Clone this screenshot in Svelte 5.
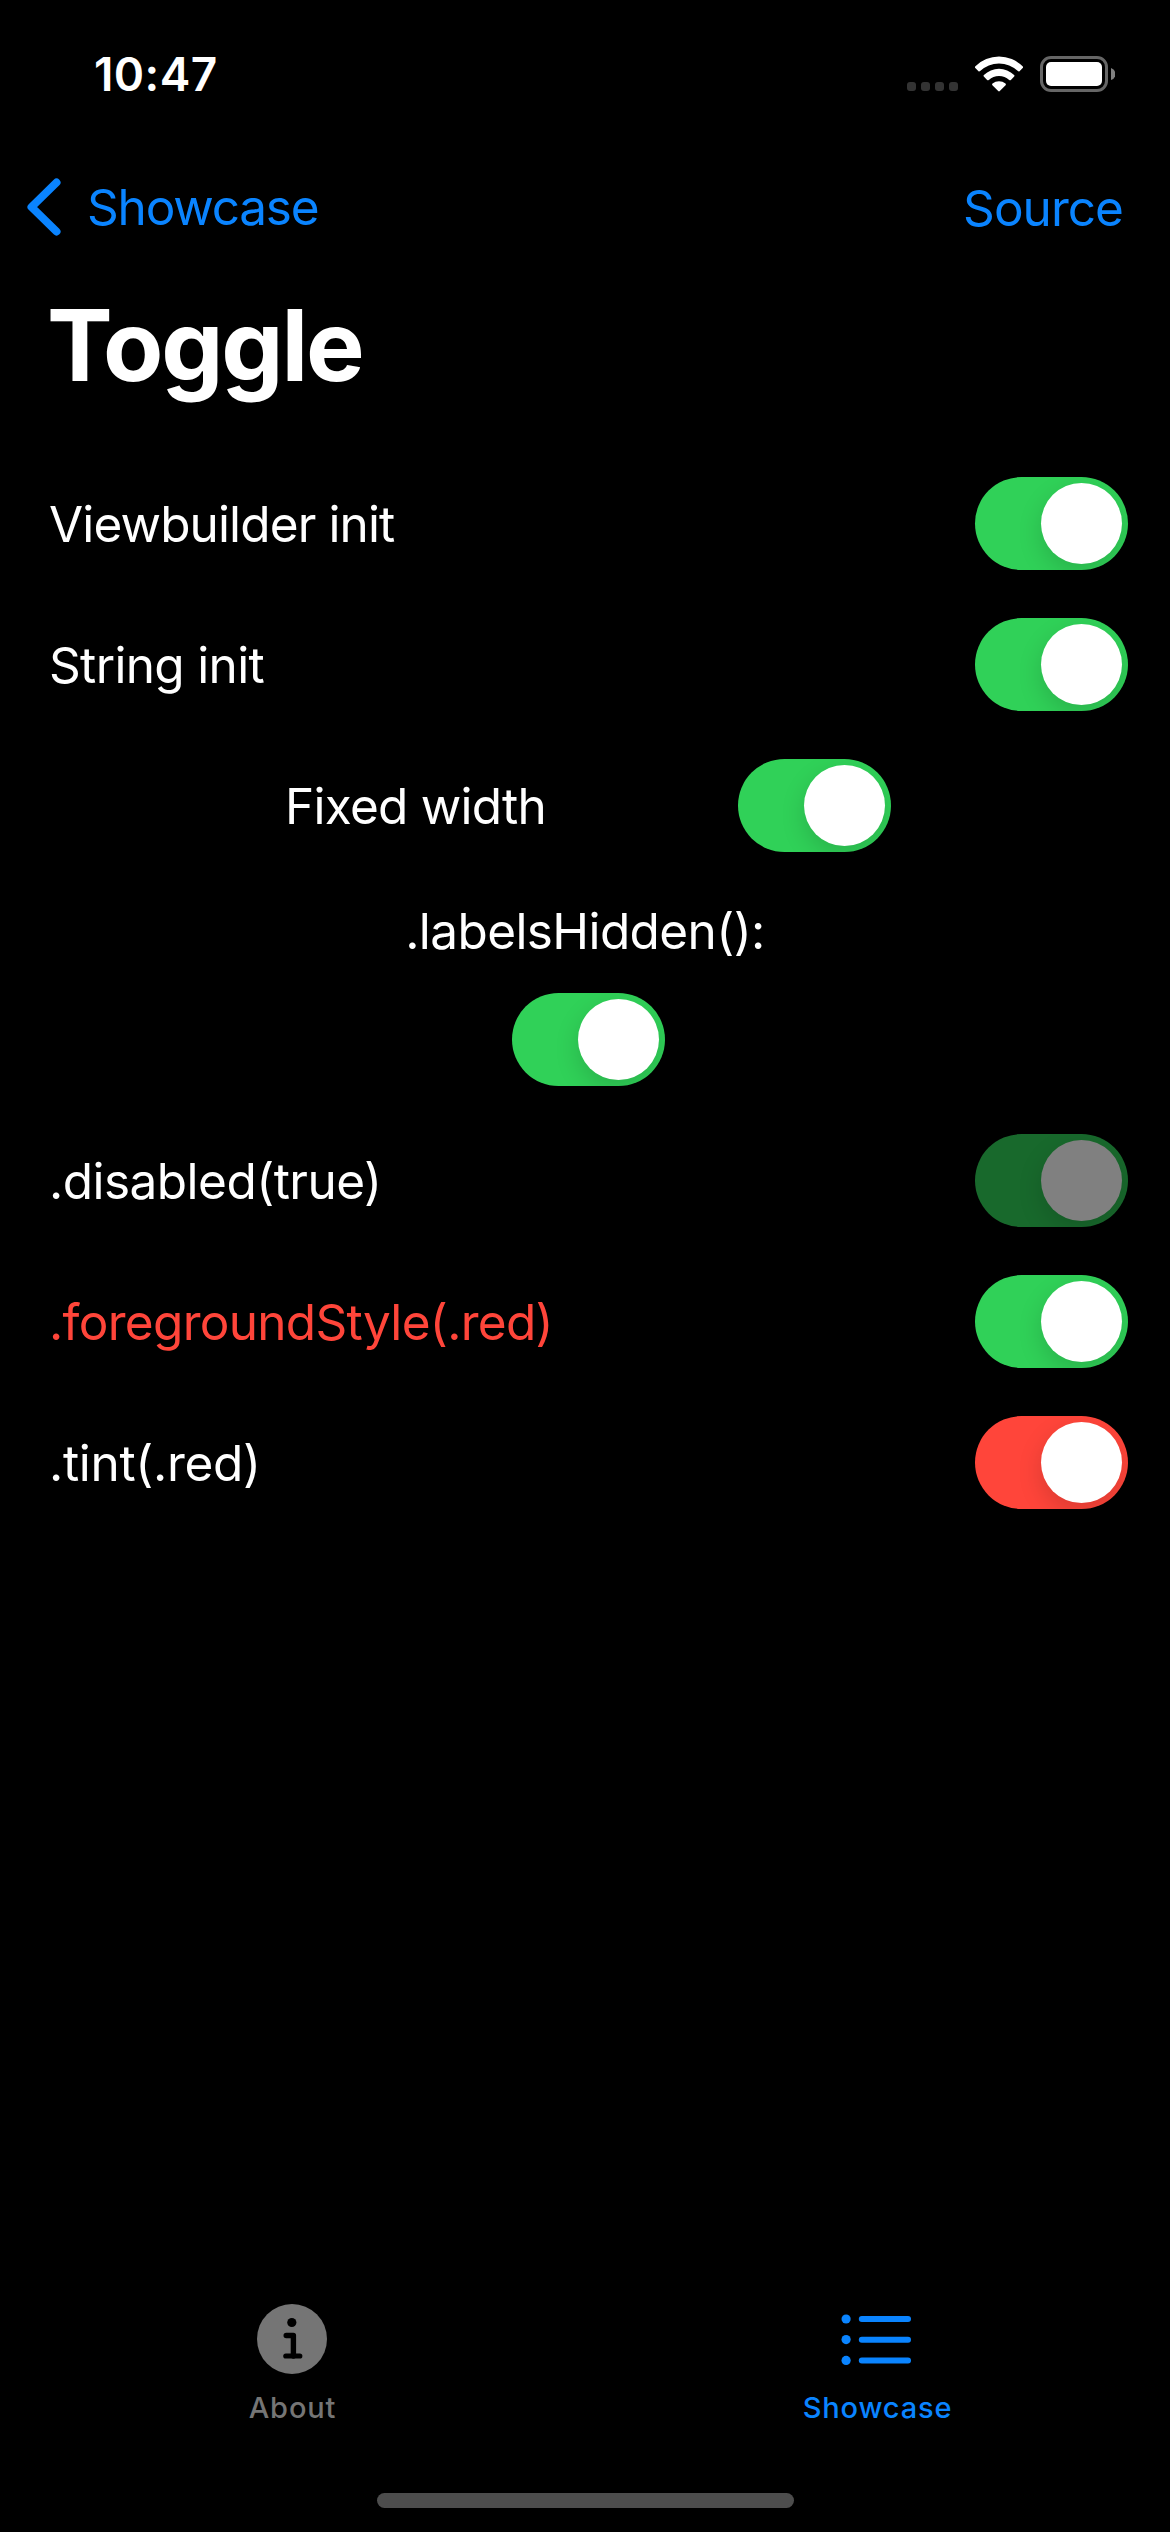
<script>
  const toggles = [
    { label: 'Viewbuilder init', fit: 'fit-viewbuilder' },
    { label: 'String init', fit: 'fit-string' },
    { label: 'Fixed width', fit: 'fit-fixed', layout: 'fixed' },
    { label: '.labelsHidden():', fit: 'fit-hidden', layout: 'stacked' },
    { label: '.disabled(true)', fit: 'fit-disabled', disabled: true },
    { label: '.foregroundStyle(.red)', fit: 'fit-style', redText: true },
    { label: '.tint(.red)', fit: 'fit-tint', redTint: true }
  ];

  let on = $state(toggles.map(() => true));
</script>

<div class="screen">
  <header class="status">
    <span class="time">10:47</span>
    <div class="indicators">
      <div class="cellular"><i></i><i></i><i></i><i></i></div>
      <svg class="wifi" width="50" height="38" viewBox="0 0 50 38">
        <path fill="#fff" d="M1.4 11.3 A33.5 33.5 0 0 1 48.6 11.3 Q49.5 12.1 48.7 12.9 L45.5 16.2 Q44.8 16.9 43.9 16.1 A27.3 27.3 0 0 0 6.1 16.1 Q5.2 16.9 4.5 16.2 L1.3 12.9 Q.5 12.1 1.4 11.3Z" />
        <path fill="#fff" d="M9.9 19.9 A21.9 21.9 0 0 1 40.1 19.9 Q41 20.8 40.2 21.6 L36.9 24.9 Q36.1 25.6 35.2 24.9 A15.1 15.1 0 0 0 14.8 24.9 Q13.9 25.6 13.1 24.9 L9.8 21.6 Q9 20.8 9.9 19.9Z" />
        <path fill="#fff" d="M18.5 28.6 A10.2 10.2 0 0 1 31.5 28.6 Q32.4 29.4 31.6 30.2 L25.8 36 Q25 36.8 24.2 36 L18.4 30.2 Q17.6 29.4 18.5 28.6Z" />
      </svg>
      <svg class="battery" width="75" height="36" viewBox="0 0 75 36">
        <rect x="1.5" y="1.5" width="65" height="33" rx="9.5" fill="none" stroke="#666" stroke-width="3" />
        <rect x="6" y="6" width="56" height="24" rx="5" fill="#fff" />
        <path d="M71 12 A6.3 6.3 0 0 1 71 24Z" fill="#808080" />
      </svg>
    </div>
  </header>

  <nav class="navbar">
    <a class="back" href="#showcase">
      <svg width="34" height="58" viewBox="0 0 34 58">
        <path d="M29.5 4.5 L4.5 29 L29.5 53.5" fill="none" stroke="currentColor" stroke-width="8" stroke-linecap="round" stroke-linejoin="round" />
      </svg>
      <span>Showcase</span>
    </a>
    <a class="source" href="#source">Source</a>
  </nav>

  <h1>Toggle</h1>

  <main>
    {#each toggles as t, i}
      <div class="row {t.layout ?? ''}">
        <span class="label {t.fit}" class:red={t.redText}>{t.label}</span>
        <button
          class="switch"
          class:on={on[i]}
          class:red-tint={t.redTint}
          disabled={t.disabled}
          role="switch"
          aria-checked={on[i]}
          aria-label={t.label}
          onclick={() => (on[i] = !on[i])}
        ><span class="knob"></span></button>
      </div>
    {/each}
  </main>

  <footer>
    <div class="tabs">
      <a class="tab" href="#about">
        <svg class="info" width="70" height="70" viewBox="0 0 70 70">
          <circle cx="35" cy="35" r="35" fill="currentColor" />
          <circle cx="34.8" cy="18.5" r="4.6" fill="#000" />
          <path d="M29.2 31.5 H36.4 V52" fill="none" stroke="#000" stroke-width="5.4" stroke-linecap="round" stroke-linejoin="round" />
          <path d="M28.8 52 H42.8" fill="none" stroke="#000" stroke-width="5.2" stroke-linecap="round" />
        </svg>
        <span>About</span>
      </a>
      <a class="tab active" href="#showcase">
        <svg class="list" width="70" height="70" viewBox="0 0 70 70">
          <g fill="currentColor">
            <circle cx="5.1" cy="15" r="4.6" />
            <circle cx="5.1" cy="35.6" r="4.6" />
            <circle cx="5.1" cy="56.4" r="4.6" />
            <rect x="17.8" y="12" width="52.2" height="6" rx="3" />
            <rect x="17.8" y="32.8" width="52.2" height="6" rx="3" />
            <rect x="17.8" y="53.5" width="52.2" height="6" rx="3" />
          </g>
        </svg>
        <span>Showcase</span>
      </a>
    </div>
    <div class="home"></div>
  </footer>
</div>

<style>
  :global(body) {
    background: #000;
  }

  .screen {
    display: flex;
    flex-direction: column;
    width: 1170px;
    height: 2532px;
    overflow: hidden;
    background: #000;
    color: #fff;
    font-family: Inter, 'Liberation Sans', sans-serif;
    font-size: 49.5px;
    line-height: 60px;
    white-space: nowrap;
  }

  a {
    color: #0a84ff;
    text-decoration: none;
  }

  .status {
    display: flex;
    justify-content: space-between;
    align-items: flex-start;
    height: 141px;
    padding: 46px 55px 0 94px;
    box-sizing: border-box;
  }

  .time {
    font-size: 46px;
    font-weight: 600;
    line-height: 56px;
    letter-spacing: 0.4px;
  }

  .indicators {
    display: flex;
    align-items: flex-start;
    padding-top: 9px;
  }

  .cellular {
    display: flex;
    gap: 5px;
    padding: 27px 16px 0 0;
  }

  .cellular i {
    width: 9px;
    height: 9px;
    border-radius: 3px;
    background: #333;
  }

  .battery {
    margin: 1px 0 0 16px;
  }

  .navbar {
    display: flex;
    justify-content: space-between;
    align-items: center;
    height: 132px;
    padding: 0 47px 0 27px;
  }

  .back {
    display: flex;
    align-items: center;
    gap: 26px;
    letter-spacing: -1.2px;
  }

  .source {
    padding-top: 2px;
    letter-spacing: -0.96px;
  }

  h1 {
    margin: 13px 0 0 47px;
    font-size: 98.5px;
    font-weight: 700;
    line-height: 120px;
    letter-spacing: -2.12px;
  }

  main {
    display: flex;
    flex: 1;
    flex-direction: column;
    gap: 48px;
    padding: 71px 42px 0 49px;
  }

  .row {
    display: flex;
    justify-content: space-between;
    align-items: center;
  }

  .row.fixed {
    width: 606px;
    margin-left: 236px;
  }

  .row.stacked {
    flex-direction: column;
    gap: 31px;
    margin-right: 7px;
  }

  .stacked .label {
    line-height: 62px;
  }

  .stacked .switch {
    margin-left: 7px;
  }

  .label.red {
    color: #ff453a;
  }

  .fit-viewbuilder { letter-spacing: -0.87px; }
  .fit-string { letter-spacing: -0.66px; }
  .fit-fixed { letter-spacing: -0.74px; }
  .fit-hidden { letter-spacing: -0.6px; }
  .fit-disabled { letter-spacing: -0.53px; }
  .fit-style { letter-spacing: -0.7px; }
  .fit-tint { letter-spacing: -0.32px; }

  .switch {
    display: flex;
    flex: none;
    width: 153px;
    height: 93px;
    padding: 6px;
    border: 0;
    border-radius: 47px;
    overflow: hidden;
    background: #39393d;
  }

  .switch.on {
    justify-content: flex-end;
    background: #30d158;
  }

  .switch.on.red-tint {
    background: #ff453a;
  }

  .switch:disabled {
    opacity: 0.5;
  }

  .knob {
    width: 81px;
    height: 81px;
    border-radius: 50%;
    background: #fff;
    box-shadow: 0 9px 24px rgba(0, 0, 0, 0.15);
  }

  footer {
    display: flex;
    flex-direction: column;
    height: 249px;
  }

  .tabs {
    display: grid;
    grid-template-columns: 1fr 1fr;
    height: 210px;
  }

  .tab {
    display: flex;
    flex-direction: column;
    align-items: center;
    gap: 16px;
    padding-top: 21px;
    color: #757575;
    font-size: 29px;
    font-weight: 450;
    line-height: 36px;
    letter-spacing: 0.85px;
  }

  .tab.active {
    color: #0a84ff;
  }

  .tab .info {
    margin-right: 1px;
  }

  .tab .list {
    margin-right: 3px;
  }

  .home {
    width: 417px;
    height: 15px;
    margin: 0 auto;
    border-radius: 8px;
    background: #4d4d4d;
  }
</style>
